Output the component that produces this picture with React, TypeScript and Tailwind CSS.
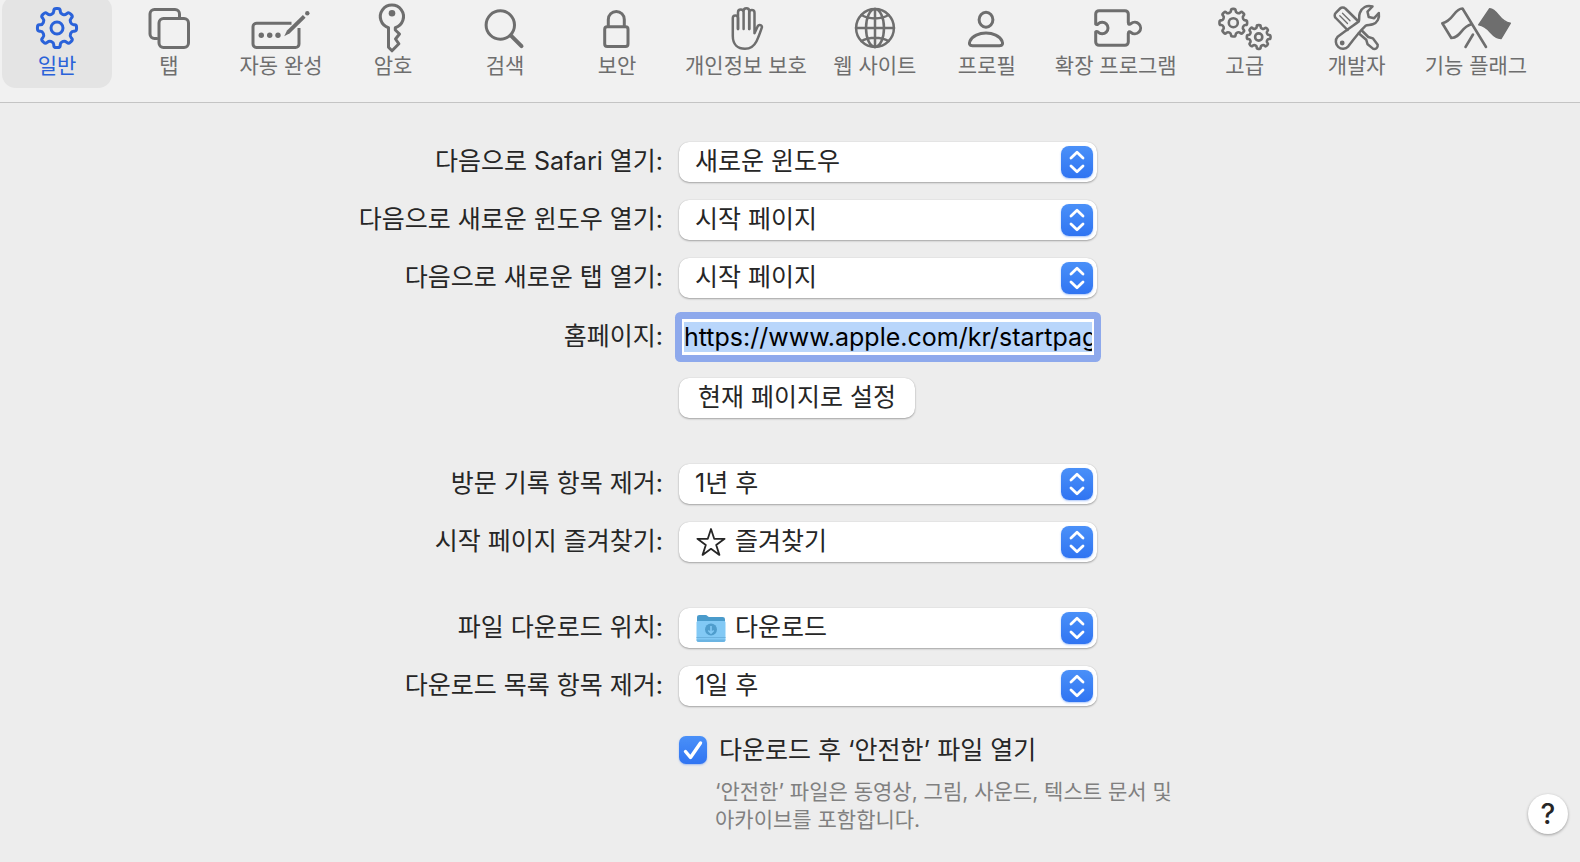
import { useEffect, useRef, useState } from "react";
import type { ReactNode } from "react";
import clsx from "clsx";

/* ---------- Icons ---------- */

// Outline of an eight-toothed gear with softened corners
function gearPath(cx: number, cy: number, outer: number, root: number) {
  const points: [number, number][] = [];
  for (let i = 0; i < 8; i++) {
    const corners = [
      [-13, root],
      [-9, outer],
      [9, outer],
      [13, root],
    ];
    for (const [deg, radius] of corners) {
      const a = ((i * 45 + deg) * Math.PI) / 180;
      points.push([cx + radius * Math.sin(a), cy - radius * Math.cos(a)]);
    }
  }
  const mix = (p: [number, number], q: [number, number], t: number) =>
    `${(p[0] + (q[0] - p[0]) * t).toFixed(2)} ${(p[1] + (q[1] - p[1]) * t).toFixed(2)}`;
  return (
    points
      .map((p, i) => {
        const prev = points[(i + points.length - 1) % points.length];
        const next = points[(i + 1) % points.length];
        return `${i === 0 ? "M" : "L"}${mix(p, prev, 0.4)}Q${p[0].toFixed(2)} ${p[1].toFixed(2)} ${mix(p, next, 0.4)}`;
      })
      .join("") + "Z"
  );
}

function ToolbarIcon({ children }: { children: ReactNode }) {
  return (
    <svg
      viewBox="0 0 72 52"
      className="h-[52px] w-[72px] shrink-0 overflow-visible"
      fill="none"
      stroke="currentColor"
      strokeWidth="3"
      strokeLinecap="round"
      strokeLinejoin="round"
      aria-hidden="true"
    >
      {children}
    </svg>
  );
}

const icons = {
  general: (
    <>
      <path d={gearPath(36, 28, 19.8, 15)} />
      <circle cx="36" cy="28" r="6" />
    </>
  ),
  tabs: (
    <>
      <path d="M24 38.5h-2.500a4.500 4.500 0 0 1-4.500-4.500V14a4.500 4.500 0 0 1 4.500-4.500H42a4.500 4.500 0 0 1 4.500 4.500v4" />
      <rect x="26" y="18.500" width="29.500" height="29" rx="4.500" />
    </>
  ),
  autofill: (
    <>
      <path
        strokeLinecap="butt"
        d="M46.500 23.300H11.500a3.500 3.500 0 0 0-3.500 3.500V44a3.500 3.500 0 0 0 3.500 3.500h39a3.500 3.500 0 0 0 3.500-3.500V28"
      />
      <path d="M39.200 36.200l2.800-5.700L57.900 15l2.700 2.700L44.800 33.300z" fill="currentColor" stroke="none" />
      <circle cx="62.300" cy="13.300" r="2.200" fill="currentColor" stroke="none" />
      <g fill="currentColor" stroke="none">
        <circle cx="16.300" cy="35.300" r="2.700" />
        <circle cx="24.700" cy="35.300" r="2.700" />
        <circle cx="33" cy="35.300" r="2.700" />
      </g>
    </>
  ),
  key: (
    <>
      <path d="M31.500 27.700a11.600 11.600 0 1 1 6.800 0V30l4.200 4-4 5 3.400 4.800L35 50.800l-3.500-3.500z" />
      <circle cx="35" cy="13.300" r="3.300" fill="currentColor" stroke="none" />
    </>
  ),
  search: (
    <>
      <circle cx="31.300" cy="25" r="14.200" />
      <path d="M42 35.600l10.500 10.500" strokeWidth="4" />
    </>
  ),
  lock: (
    <>
      <rect x="23.700" y="26.700" width="23.300" height="19.800" rx="2.500" />
      <path d="M27.300 26.500V19.400a8 8 0 0 1 16 0v7.100" />
    </>
  ),
  hand: (
    <g strokeWidth="2.500">
      <path d="M28 29V18a2.600 2.600 0 0 0-5.200 0V36c0 8.500 5 12.800 12.200 12.800 5.600 0 9-2.600 11.400-7.300 2-4 3.800-9 5.400-13.800.9-2.700-2.900-3.700-4.200-1.300l-3.100 6.800V12.700a2.650 2.650 0 0 0-5.300 0V29" />
      <path d="M28 29V12.300a2.800 2.800 0 0 1 5.600 0V29M33.600 29V11a2.800 2.800 0 0 1 5.600 0v18" />
    </g>
  ),
  globe: (
    <g strokeWidth="2.500">
      <circle cx="36" cy="28" r="18.900" />
      <ellipse cx="36" cy="28" rx="9" ry="18.900" />
      <path d="M36 9v38M17 28h38M22.500 15c7.500 4.500 19.500 4.500 27 0M22.500 41c7.500-4.500 19.500-4.500 27 0" />
    </g>
  ),
  profile: (
    <>
      <ellipse cx="35" cy="19.700" rx="6.900" ry="7.500" />
      <path d="M21.500 45.700h27c3.200 0 3.700-2 2.500-4.700C48.600 36 42 33 35 33s-13.600 3-16 8c-1.200 2.700-.7 4.700 2.500 4.700z" />
    </>
  ),
  puzzle: (
    <path d="M15.700 24V14a3.300 3.300 0 0 1 3.300-3.300h26a3.300 3.300 0 0 1 3.300 3.300v8.500c0 2 1.400 2.300 2.600 1.200a5.800 5.800 0 1 1 0 8.600c-1.200-1.100-2.600-.8-2.600 1.200V42a3.300 3.300 0 0 1-3.300 3.300H19a3.300 3.300 0 0 1-3.300-3.300V32c.6-.8 1.400-.7 2.300 0a5.800 5.800 0 1 0 0-8c-.9.7-1.700.8-2.300 0z" />
  ),
  advanced: (
    <g strokeWidth="2.600">
      <path d={gearPath(24.300, 22.700, 14, 10.800)} />
      <circle cx="24.300" cy="22.700" r="4.500" />
      <path d={gearPath(49.700, 37, 12, 9.200)} />
      <circle cx="49.700" cy="37" r="3.600" />
    </g>
  ),
  tools: (
    <g strokeWidth="2.500">
      <path d="M26.500 30L14.800 18a3.600 3.600 0 0 1 0-5.200l4.300-4.300a3.600 3.600 0 0 1 5.200 0L37 21" />
      <path d="M21.500 13.300l7.500 7.500M18.800 15.800l7.700 7.700" strokeWidth="1.300" />
      <path d="M51.500 6.500l-5 5.200 1.200 5.300 5.500 1.200 4.600-5.200c1 5-1.500 9.800-6 11.300-3 1-5.300.3-7.300 1.500C40 30 32 40 27.300 46.300a7 7 0 1 1-10.600-9.600C24 31 33 25 37.800 21.500c1-2.800-.3-5 1-8.500 2-5.500 7-8.300 12.700-6.500z" />
      <circle cx="21.200" cy="43" r="2.400" fill="currentColor" stroke="none" />
      <path d="M40.800 30.500l6.500 6.500 4.700 1.400 4.700 6.300c.4 2.700-1.800 4.800-4.400 4.200l-5.700-4.600-1.400-4.600-7.500-6.500" />
    </g>
  ),
  flags: (
    <g strokeWidth="2.600">
      <path d="M46 47L22.500 8.500C14 8.500 13.500 21 2.300 23.200l9 14.800c10-.5 9.500-11 20-13.700" />
      <path d="M33 34.500L25.500 47" />
      <path
        d="M49.700 8.700c8.500.8 9 13 20.600 14.500L61 38.500c-10.500-.5-10.500-12-22.300-13.700z"
        fill="currentColor"
        strokeWidth="1.500"
      />
    </g>
  ),
};

function StarIcon() {
  return (
    <svg viewBox="0 0 30 30" className="size-[30px]" fill="none" stroke="#262626" strokeWidth="1.800" strokeLinejoin="round">
      <path d="M15 1l3.200 9.800h10.400l-8.400 6.200 3.200 9.900-8.400-6.100-8.400 6.100 3.200-9.900-8.400-6.200h10.400z" />
    </svg>
  );
}

function FolderIcon() {
  return (
    <svg viewBox="0 0 30 30" className="size-[30px]">
      <path d="M1 3.500C1 1.800 1.800 1 3.500 1h6c1.800 0 2.200 2 4 2h13c1.700 0 2.500.8 2.500 2.500V14H1z" fill="#4a9bcb" />
      <path d="M.5 8.500C.5 7.600 1.100 7 2 7h26c.9 0 1.500.6 1.500 1.500v17c0 1.700-.8 2.500-2.500 2.500H3C1.300 28 .5 27.200.5 25.500z" fill="#82c9f5" />
      <path d="M.5 23.500h29" stroke="#6bb2df" />
      <path d="M.5 25.500C.5 27.200 1.300 28 3 28h24c1.700 0 2.500-.8 2.500-2.500z" fill="#6bb4e2" />
      <circle cx="15" cy="15.500" r="6" fill="#4f9dcd" />
      <path d="M15 12v7M12.300 16.500L15 19.200l2.700-2.700" stroke="#82c9f5" strokeWidth="1.600" fill="none" />
    </svg>
  );
}

/* ---------- Toolbar ---------- */

const toolbarItems: { label: string; icon: keyof typeof icons }[] = [
  { label: "일반", icon: "general" },
  { label: "탭", icon: "tabs" },
  { label: "자동 완성", icon: "autofill" },
  { label: "암호", icon: "key" },
  { label: "검색", icon: "search" },
  { label: "보안", icon: "lock" },
  { label: "개인정보 보호", icon: "hand" },
  { label: "웹 사이트", icon: "globe" },
  { label: "프로필", icon: "profile" },
  { label: "확장 프로그램", icon: "puzzle" },
  { label: "고급", icon: "advanced" },
  { label: "개발자", icon: "tools" },
  { label: "기능 플래그", icon: "flags" },
];

function Toolbar() {
  const [active, setActive] = useState("일반");

  return (
    <nav className="flex gap-0.5 overflow-hidden border-b border-[#c4c4c4] bg-[#f1f1f1] px-0.5 pb-3.5">
      {toolbarItems.map((item) => (
        <button
          key={item.label}
          type="button"
          aria-pressed={active === item.label}
          onClick={() => setActive(item.label)}
          className={clsx(
            "-mt-1 flex min-w-[110px] flex-col items-center rounded-[14px] px-[11px] pt-1 pb-2 text-[21px] leading-7 whitespace-nowrap",
            active === item.label ? "bg-[#e4e4e4] text-[#2a62d9]" : "text-[#6e6e6e]",
          )}
        >
          <ToolbarIcon>{icons[item.icon]}</ToolbarIcon>
          {item.label}
        </button>
      ))}
    </nav>
  );
}

/* ---------- Form ---------- */

interface RowProps {
  label?: string;
  htmlFor?: string;
  className?: string;
  children: ReactNode;
}

function Row({ label, htmlFor, className, children }: RowProps) {
  return (
    <div className={clsx("grid grid-cols-[322px_1fr] items-center", className)}>
      <div className="pr-4 pb-0.5 text-right whitespace-nowrap">
        {label && <label htmlFor={htmlFor}>{label}</label>}
      </div>
      <div>{children}</div>
    </div>
  );
}

interface PopUpProps {
  id: string;
  options: string[];
  icon?: ReactNode;
}

function PopUp({ id, options, icon }: PopUpProps) {
  return (
    <div className="relative w-full max-w-[418px]">
      <select
        id={id}
        className={clsx(
          "block h-10 w-full appearance-none rounded-[10px] bg-white pr-12 pb-0.5 shadow-[0_1px_2px_rgba(0,0,0,0.3),0_0_1px_rgba(0,0,0,0.2)] outline-none",
          icon ? "pl-14" : "pl-4",
        )}
      >
        {options.map((option) => (
          <option key={option}>{option}</option>
        ))}
      </select>
      {icon && <span className="pointer-events-none absolute top-1.5 left-[17px]">{icon}</span>}
      <span className="pointer-events-none absolute top-1 right-1 size-8 rounded-lg bg-linear-to-b from-[#4a90f8] to-[#3074f2] shadow-[0_1px_2px_rgba(48,116,242,0.4)]">
        <svg
          viewBox="0 0 32 32"
          className="size-8"
          fill="none"
          stroke="white"
          strokeWidth="2.800"
          strokeLinecap="round"
          strokeLinejoin="round"
        >
          <path d="M10 12l6-5.700 6 5.700M10 20l6 5.700 6-5.700" />
        </svg>
      </span>
    </div>
  );
}

function HomepageInput() {
  const ref = useRef<HTMLInputElement>(null);

  useEffect(() => {
    ref.current?.focus({ preventScroll: true });
    ref.current?.select();
  }, []);

  return (
    <input
      ref={ref}
      id="homepage"
      type="text"
      defaultValue="https://www.apple.com/kr/startpage/"
      className="block h-[42px] w-full max-w-[418px] rounded-[2px] border-3 border-[#8ea9ec] bg-white px-0.5 leading-8 text-black ring-4 ring-[#8ea9ec] outline-none selection:bg-[#b9d6fb] selection:text-black"
    />
  );
}

export default function App() {
  return (
    <div className="relative min-h-screen bg-[#ededed] font-['Inter','Noto_Sans_CJK_KR',sans-serif] text-[25px] leading-9 text-[#262626]">
      <Toolbar />

      <main className="mx-auto flex max-w-[866px] flex-col gap-[18px] pt-[39px] pb-5">
        <Row label="다음으로 Safari 열기:" htmlFor="opens-with">
          <PopUp id="opens-with" options={["새로운 윈도우"]} />
        </Row>
        <Row label="다음으로 새로운 윈도우 열기:" htmlFor="new-window">
          <PopUp id="new-window" options={["시작 페이지"]} />
        </Row>
        <Row label="다음으로 새로운 탭 열기:" htmlFor="new-tab">
          <PopUp id="new-tab" options={["시작 페이지"]} />
        </Row>
        <Row label="홈페이지:" htmlFor="homepage">
          <HomepageInput />
        </Row>
        <Row className="mt-0.5">
          <button
            type="button"
            className="block h-10 w-[236px] rounded-[10px] bg-white pb-0.5 shadow-[0_1px_2px_rgba(0,0,0,0.3),0_0_1px_rgba(0,0,0,0.2)]"
          >
            현재 페이지로 설정
          </button>
        </Row>

        <Row label="방문 기록 항목 제거:" htmlFor="history" className="mt-7">
          <PopUp id="history" options={["1년 후"]} />
        </Row>
        <Row label="시작 페이지 즐겨찾기:" htmlFor="favorites">
          <PopUp id="favorites" options={["즐겨찾기"]} icon={<StarIcon />} />
        </Row>

        <Row label="파일 다운로드 위치:" htmlFor="download-location" className="mt-7">
          <PopUp id="download-location" options={["다운로드"]} icon={<FolderIcon />} />
        </Row>
        <Row label="다운로드 목록 항목 제거:" htmlFor="download-list">
          <PopUp id="download-list" options={["1일 후"]} />
        </Row>

        <Row className="mt-2">
          <div className="flex items-center gap-3">
            <span className="relative size-7 shrink-0">
              <input
                id="open-safe"
                type="checkbox"
                defaultChecked
                className="peer block size-7 appearance-none rounded-[7px] bg-white shadow-[0_1px_2px_rgba(48,116,242,0.4)] checked:bg-linear-to-b checked:from-[#4a90f8] checked:to-[#3074f2]"
              />
              <svg
                viewBox="0 0 28 28"
                className="pointer-events-none absolute inset-0 hidden size-7 peer-checked:block"
                fill="none"
                stroke="white"
                strokeWidth="3.400"
                strokeLinecap="round"
                strokeLinejoin="round"
              >
                <path d="M6.500 15.500l5 6L21.500 7" />
              </svg>
            </span>
            <label htmlFor="open-safe">다운로드 후 ‘안전한’ 파일 열기</label>
          </div>
          <p className="mt-2.5 ml-9 text-[21px] leading-7 text-[#808080]">
            ‘안전한’ 파일은 동영상, 그림, 사운드, 텍스트 문서 및
            <br />
            아카이브를 포함합니다.
          </p>
        </Row>
      </main>

      <button
        type="button"
        aria-label="도움말"
        className="absolute right-3 bottom-7 size-10 rounded-full bg-white text-[28px] leading-10 font-medium shadow-[0_1px_3px_rgba(0,0,0,0.35)]"
      >
        ?
      </button>
    </div>
  );
}
